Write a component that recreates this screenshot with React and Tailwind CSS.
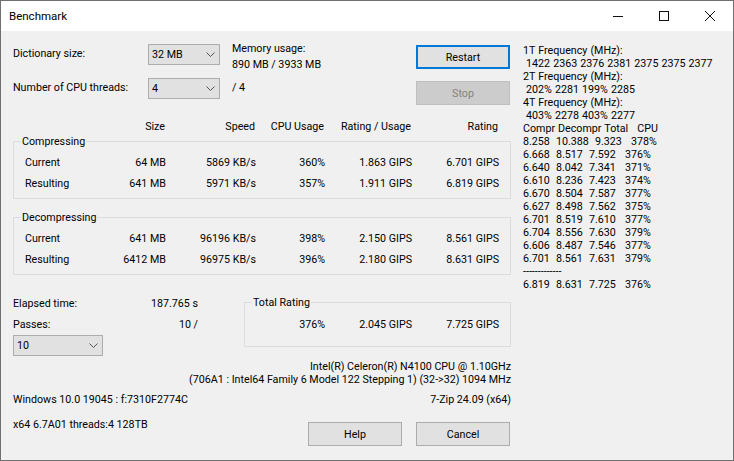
function Select({ value, w }) {
  return (
    <div className={`flex h-[21px] items-center justify-between border border-[#adadad] bg-[#e1e1e1] pl-[3px] pr-[4px] ${w}`}>
      <span>{value}</span>
      <svg width="9" height="6" viewBox="0 0 9 6" className="mt-px"><path d="M.5 .5 4.5 4.5 8.5 .5" fill="none" stroke="#555" strokeWidth="1" /></svg>
    </div>
  );
}
function Button({ children, className = "" }) {
  return <div className={`flex h-[24px] w-[94px] items-center justify-center border ${className || "border-[#adadad] bg-[#e1e1e1]"}`}>{children}</div>;
}
function DataRow({ cells }) {
  return (
    <div className="grid h-[21px] grid-cols-[68px_84px_90px_69px_87px_87px] items-center text-right">
      <span className="pl-[11px] text-left">{cells[0]}</span>
      {cells.slice(1).map((c, i) => <span key={i}>{c}</span>)}
    </div>
  );
}
function Group({ title, children, className = "" }) {
  return (
    <div className={`relative border border-[#dcdcdc] ${className}`}>
      <span className="absolute left-[7px] top-[-8px] bg-[#f0f0f0] px-[1px] leading-[15px]">{title}</span>
      {children}
    </div>
  );
}
const right = [
  "1T Frequency (MHz):", " 1422 2363 2376 2381 2375 2375 2377", "2T Frequency (MHz):", " 202% 2281 199% 2285", "4T Frequency (MHz):", " 403% 2278 403% 2277",
  "Compr Decompr Total   CPU", "8.258  10.388  9.323   378%", "6.668  8.517  7.592   376%", "6.640  8.042  7.341   371%", "6.610  8.236  7.423   374%", "6.670  8.504  7.587   377%", "6.627  8.498  7.562   375%", "6.701  8.519  7.610   377%", "6.704  8.556  7.630   379%", "6.606  8.487  7.546   377%", "6.701  8.561  7.631   379%", "-------------", "6.819  8.631  7.725   376%",
];
export default function App() {
  return (
    <div className="flex h-[461px] w-[734px] flex-col border border-[#707070] bg-[#f0f0f0] font-['Roboto',sans-serif] text-[10.7px] leading-[15px] text-black">
      <div className="flex h-[30px] items-center justify-between bg-white pl-[8px]">
        <span className="text-[11.5px]">Benchmark</span>
        <div className="flex items-center">
          <div className="flex h-[30px] w-[46px] items-center justify-center"><svg width="10" height="10" viewBox="0 0 10 10"><path d="M0 5.5H10" stroke="#111" /></svg></div>
          <div className="flex h-[30px] w-[46px] items-center justify-center"><svg width="10" height="10" viewBox="0 0 10 10"><rect x=".5" y=".5" width="9" height="9" fill="none" stroke="#111" /></svg></div>
          <div className="flex h-[30px] w-[46px] items-center justify-center"><svg width="10" height="10" viewBox="0 0 10 10"><path d="M0 0 10 10M10 0 0 10" stroke="#111" /></svg></div>
        </div>
      </div>
      <div className="flex flex-1">
        <div className="ml-[12px] flex w-[498px] flex-col">
          <div className="mt-[13px] flex">
            <div className="flex w-[135px] flex-col pt-[2px]">
              <span className="h-[34px]">Dictionary size:</span>
              <span>Number of CPU threads:</span>
            </div>
            <div className="flex w-[84px] flex-col gap-[13px]">
              <Select value="32 MB" w="w-[72px]" />
              <Select value="4" w="w-[72px]" />
            </div>
            <div className="-mt-[3px] flex w-[184px] flex-col">
              <span className="h-[16px]">Memory usage:</span>
              <span>890 MB / 3933 MB</span>
              <span className="mt-[8px]">/ 4</span>
            </div>
            <div className="flex flex-col gap-[12px] pt-[1px]">
              <Button className="border-2 border-[#0078d7] bg-[#e1e1e1]">Restart</Button>
              <Button className="border-[#bfbfbf] bg-[#cccccc] text-[#838383]">Stop</Button>
            </div>
          </div>
          <div className="mt-[11px]">
            <DataRow cells={["", "Size", "Speed", "CPU Usage", "Rating / Usage", "Rating"]} />
          </div>
          <Group title="Compressing" className="mt-[4px] h-[58px] pt-[10px]">
            <DataRow cells={["Current", "64 MB", "5869 KB/s", "360%", "1.863 GIPS", "6.701 GIPS"]} />
            <DataRow cells={["Resulting", "641 MB", "5971 KB/s", "357%", "1.911 GIPS", "6.819 GIPS"]} />
          </Group>
          <Group title="Decompressing" className="mt-[18px] h-[58px] pt-[10px]">
            <DataRow cells={["Current", "641 MB", "96196 KB/s", "398%", "2.150 GIPS", "8.561 GIPS"]} />
            <DataRow cells={["Resulting", "6412 MB", "96975 KB/s", "396%", "2.180 GIPS", "8.631 GIPS"]} />
          </Group>
          <div className="mt-[17px] flex">
            <div className="flex w-[231px] flex-col">
              <div className="flex h-[21px] items-center justify-between pr-[46px] pt-[2px]"><span>Elapsed time:</span><span>187.765 s</span></div>
              <div className="flex h-[21px] items-center justify-between pr-[46px] pt-[2px]"><span>Passes:</span><span>10 /</span></div>
              <div className="mt-[1px]"><Select value="10" w="w-[90px]" /></div>
            </div>
            <Group title="Total Rating" className="mt-[10px] h-[45px] w-[267px] pt-[11px]">
              <div className="grid h-[21px] grid-cols-[80px_87px_87px] items-center text-right">
                <span>376%</span><span>2.045 GIPS</span><span>7.725 GIPS</span>
              </div>
            </Group>
          </div>
          <div className="mt-[4px] flex flex-col items-end leading-[13px]">
            <span>Intel(R) Celeron(R) N4100 CPU @ 1.10GHz</span>
            <span>(706A1 : Intel64 Family 6 Model 122 Stepping 1) (32-&gt;32) 1094 MHz</span>
          </div>
          <div className="mt-[6px] flex justify-between"><span>Windows 10.0 19045 : f:7310F2774C</span><span>7-Zip 24.09 (x64)</span></div>
          <div className="mt-[10px] flex items-start justify-between">
            <span>x64 6.7A01 threads:4 128TB</span>
            <div className="mr-[1px] mt-[5px] flex gap-[14px]"><Button>Help</Button><Button>Cancel</Button></div>
          </div>
        </div>
        <div className="ml-[12px] mt-[13px] flex flex-col whitespace-pre leading-[13px] [word-spacing:0.4px]">
          {right.map((r, i) => <span key={i}>{r}</span>)}
        </div>
      </div>
    </div>
  );
}
